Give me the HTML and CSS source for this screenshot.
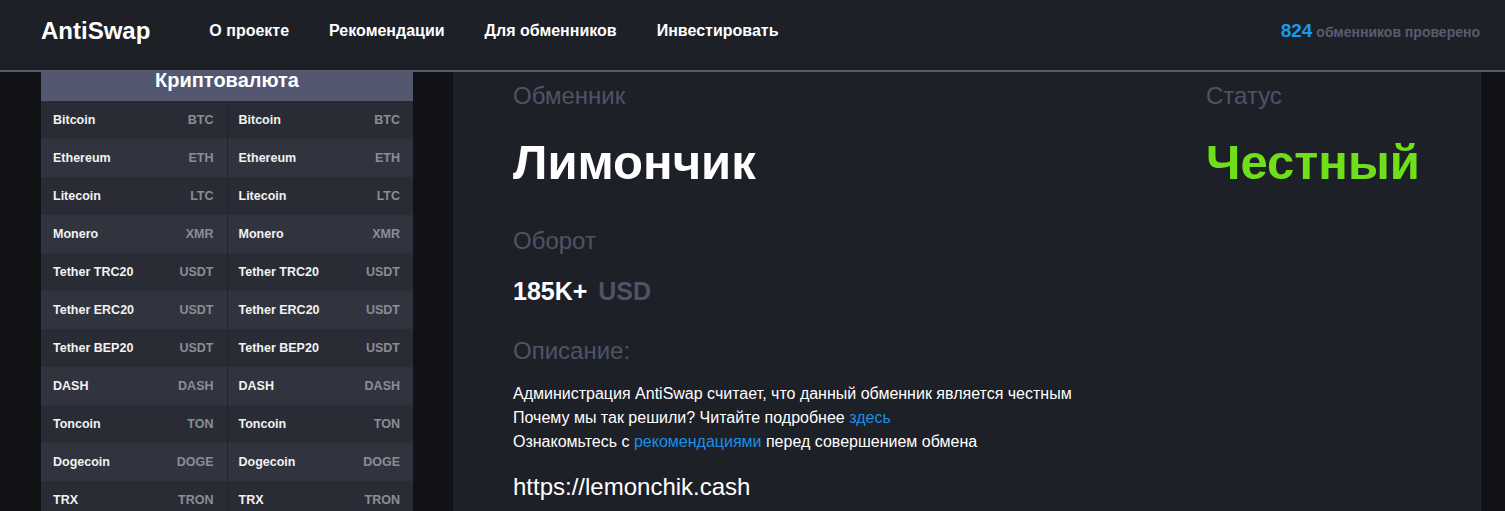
FILE: index.html
```html
<!DOCTYPE html>
<html lang="ru">
<head>
<meta charset="UTF-8">
<meta name="viewport" content="width=device-width, initial-scale=1.0">
<title>AntiSwap — Лимончик</title>
<link rel="stylesheet" href="styles.css">
</head>
<body>

<header class="topbar">
  <a class="logo" href="#">AntiSwap</a>
  <nav class="menu">
    <a href="#">О проекте</a>
    <a href="#">Рекомендации</a>
    <a href="#">Для обменников</a>
    <a href="#">Инвестировать</a>
  </nav>
  <div class="checked"><span class="checked-num">824</span> обменников проверено</div>
</header>

<div class="page">
  <aside class="coins">
    <table>
      <thead>
        <tr><th colspan="2">Криптовалюта</th></tr>
      </thead>
      <tbody>
        <tr><td><div class="coin"><span>Bitcoin</span><span class="tick">BTC</span></div></td><td><div class="coin"><span>Bitcoin</span><span class="tick">BTC</span></div></td></tr>
        <tr><td><div class="coin"><span>Ethereum</span><span class="tick">ETH</span></div></td><td><div class="coin"><span>Ethereum</span><span class="tick">ETH</span></div></td></tr>
        <tr><td><div class="coin"><span>Litecoin</span><span class="tick">LTC</span></div></td><td><div class="coin"><span>Litecoin</span><span class="tick">LTC</span></div></td></tr>
        <tr><td><div class="coin"><span>Monero</span><span class="tick">XMR</span></div></td><td><div class="coin"><span>Monero</span><span class="tick">XMR</span></div></td></tr>
        <tr><td><div class="coin"><span>Tether TRC20</span><span class="tick">USDT</span></div></td><td><div class="coin"><span>Tether TRC20</span><span class="tick">USDT</span></div></td></tr>
        <tr><td><div class="coin"><span>Tether ERC20</span><span class="tick">USDT</span></div></td><td><div class="coin"><span>Tether ERC20</span><span class="tick">USDT</span></div></td></tr>
        <tr><td><div class="coin"><span>Tether BEP20</span><span class="tick">USDT</span></div></td><td><div class="coin"><span>Tether BEP20</span><span class="tick">USDT</span></div></td></tr>
        <tr><td><div class="coin"><span>DASH</span><span class="tick">DASH</span></div></td><td><div class="coin"><span>DASH</span><span class="tick">DASH</span></div></td></tr>
        <tr><td><div class="coin"><span>Toncoin</span><span class="tick">TON</span></div></td><td><div class="coin"><span>Toncoin</span><span class="tick">TON</span></div></td></tr>
        <tr><td><div class="coin"><span>Dogecoin</span><span class="tick">DOGE</span></div></td><td><div class="coin"><span>Dogecoin</span><span class="tick">DOGE</span></div></td></tr>
        <tr><td><div class="coin"><span>TRX</span><span class="tick">TRON</span></div></td><td><div class="coin"><span>TRX</span><span class="tick">TRON</span></div></td></tr>
      </tbody>
    </table>
  </aside>

  <main class="card">
    <div class="card-top">
      <div>
        <div class="label">Обменник</div>
        <h1 class="title">Лимончик</h1>
      </div>
      <div>
        <div class="label">Статус</div>
        <div class="title status-ok">Честный</div>
      </div>
    </div>

    <div class="label label-turnover">Оборот</div>
    <div class="turnover">185K+ <span class="currency">USD</span></div>

    <div class="label label-desc">Описание:</div>
    <p class="desc">
      Администрация AntiSwap считает, что данный обменник является честным<br>
      Почему мы так решили? Читайте подробнее <a href="#">здесь</a><br>
      Ознакомьтесь с <a href="#">рекомендациями</a> перед совершением обмена
    </p>

    <div class="site">https://lemonchik.cash</div>
  </main>
</div>

</body>
</html>
```

FILE: styles.css
```css
body, html {
  margin: 0;
  padding: 0;
  height: 100%;
  overflow: hidden;
  background: #111216;
  color: #fff;
  font-family: "Liberation Sans", Arial, sans-serif;
}
a {
  color: inherit;
  text-decoration: none;
}

/* header */
.topbar {
  display: flex;
  align-items: center;
  height: 62px;
  padding: 0 25px 8px 41px;
  background: #1e2027;
  border-bottom: 2px solid #575b6b;
}
.logo {
  font-size: 24px;
  font-weight: bold;
  margin-right: 59px;
}
.menu {
  display: flex;
  gap: 40px;
}
.menu a {
  font-size: 16px;
  font-weight: bold;
}
.checked {
  margin-left: auto;
  font-size: 14px;
  font-weight: bold;
  color: #585d71;
}
.checked-num {
  font-size: 19px;
  color: #1a98ee;
}

/* layout */
.page {
  display: flex;
  gap: 40px;
  padding: 0 24px 0 41px;
  height: calc(100% - 72px);
}

/* coins table */
.coins {
  width: 372px;
  flex: none;
}
.coins table {
  width: 100%;
  border-collapse: collapse;
  table-layout: fixed;
}
.coins th {
  height: 29px;
  padding: 0;
  box-sizing: border-box;
  background: #535770;
  font-size: 20px;
  line-height: 16px;
  vertical-align: top;
}
.coins td {
  height: 38px;
  padding: 0 13px 0 12px;
  background: #2a2c35;
  font-size: 12.5px;
  font-weight: bold;
  color: #f2f2f2;
}
.coins td:first-child {
  border-right: 1px solid #22242b;
}
.coins td + td {
  padding-left: 11px;
}
.coins tr:nth-child(even) td {
  background: #31343e;
}
.coin {
  display: flex;
  justify-content: space-between;
}
.tick {
  color: #8a8d98;
}

/* exchanger card */
.card {
  flex: 1;
  background: #1e2028;
  border-right: 1px solid #24262e;
  padding: 10px 0 0 60px;
}
.card-top {
  display: grid;
  grid-template-columns: 1fr 274px;
}
.label {
  font-size: 24px;
  line-height: 28px;
  color: #4f5366;
}
.title {
  margin: 24px 0 0;
  font-size: 49px;
  line-height: 56px;
  font-weight: bold;
}
.status-ok {
  color: #6fdf19;
}
.label-turnover {
  margin-top: 37px;
}
.turnover {
  margin-top: 22px;
  font-size: 25px;
  line-height: 28px;
  font-weight: bold;
}
.currency {
  margin-left: 4px;
  color: #4f5366;
}
.label-desc {
  margin-top: 32px;
}
.desc {
  margin: 17px 0 0;
  font-size: 16px;
  line-height: 24px;
}
.desc a {
  color: #1a8fe3;
}
.site {
  margin-top: 19px;
  font-size: 24px;
  line-height: 28px;
}
```
